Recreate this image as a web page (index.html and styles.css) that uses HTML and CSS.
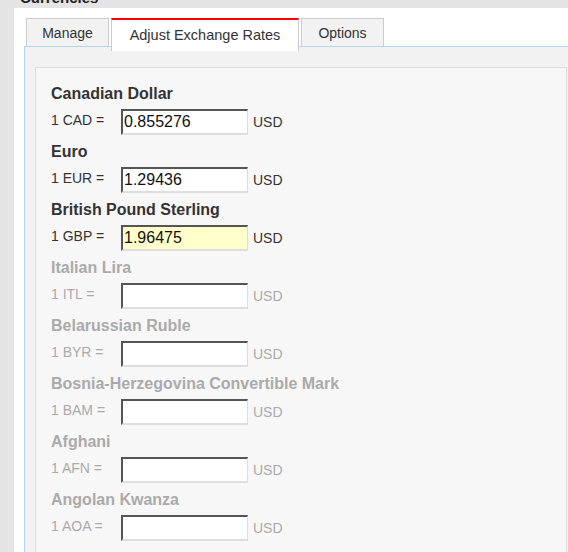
FILE: index.html
```html
<!DOCTYPE html>
<html>
<head>
<meta charset="utf-8">
<title>Currencies</title>
<link rel="stylesheet" href="styles.css">
</head>
<body>
<div class="page-title"><h1>Currencies</h1></div>
<div class="sheet">
  <div class="tabs">
    <div class="tab tab-manage">Manage</div>
    <div class="tab tab-active">Adjust Exchange Rates</div>
    <div class="tab tab-options">Options</div>
  </div>
  <div class="panel">
    <div class="box">
      <div class="cur">
        <div class="cur-name">Canadian Dollar</div>
        <div class="cur-row"><span class="cur-label">1 CAD =</span><input class="cur-input" type="text" value="0.855276"><span class="cur-unit">USD</span></div>
      </div>
      <div class="cur">
        <div class="cur-name">Euro</div>
        <div class="cur-row"><span class="cur-label">1 EUR =</span><input class="cur-input" type="text" value="1.29436"><span class="cur-unit">USD</span></div>
      </div>
      <div class="cur">
        <div class="cur-name">British Pound Sterling</div>
        <div class="cur-row"><span class="cur-label">1 GBP =</span><input class="cur-input cur-input-focus" type="text" value="1.96475"><span class="cur-unit">USD</span></div>
      </div>
      <div class="cur cur-off">
        <div class="cur-name">Italian Lira</div>
        <div class="cur-row"><span class="cur-label">1 ITL =</span><input class="cur-input" type="text" value=""><span class="cur-unit">USD</span></div>
      </div>
      <div class="cur cur-off">
        <div class="cur-name">Belarussian Ruble</div>
        <div class="cur-row"><span class="cur-label">1 BYR =</span><input class="cur-input" type="text" value=""><span class="cur-unit">USD</span></div>
      </div>
      <div class="cur cur-off">
        <div class="cur-name">Bosnia-Herzegovina Convertible Mark</div>
        <div class="cur-row"><span class="cur-label">1 BAM =</span><input class="cur-input" type="text" value=""><span class="cur-unit">USD</span></div>
      </div>
      <div class="cur cur-off">
        <div class="cur-name">Afghani</div>
        <div class="cur-row"><span class="cur-label">1 AFN =</span><input class="cur-input" type="text" value=""><span class="cur-unit">USD</span></div>
      </div>
      <div class="cur cur-off">
        <div class="cur-name">Angolan Kwanza</div>
        <div class="cur-row"><span class="cur-label">1 AOA =</span><input class="cur-input" type="text" value=""><span class="cur-unit">USD</span></div>
      </div>
    </div>
  </div>
</div>
</body>
</html>
```

FILE: styles.css
```css
html {
  overflow: hidden;
}
body {
  margin: 0;
  background: #e4e4e4;
  font-family: "Liberation Sans", Arial, sans-serif;
  color: #333;
}
.page-title {
  height: 8px;
  overflow: hidden;
}
.page-title h1 {
  margin: -10px 0 0 20px;
  font-size: 15px;
  line-height: 15px;
  font-weight: bold;
  color: #222;
}
.sheet {
  margin-left: 14px;
  background: #fff;
  padding: 10px 0 0 10px;
}
.tabs {
  display: flex;
  align-items: flex-start;
  gap: 2px;
  height: 28px;
  margin-left: 2px;
}
.tab {
  box-sizing: border-box;
  height: 28px;
  border: 1px solid #ccc;
  border-bottom: none;
  background: #f2f2f2;
  font-size: 14px;
  line-height: 26px;
  padding-top: 1px;
  text-align: center;
  color: #333;
  white-space: nowrap;
}
.tab-manage {
  width: 83px;
}
.tab-options {
  width: 83px;
}
.tab-active {
  position: relative;
  z-index: 1;
  width: 188px;
  height: 33px;
  padding-top: 0;
  border-top: 2px solid #f00;
  background: #fff;
  font-size: 14.5px;
  line-height: 31px;
}
.panel {
  border-top: 1px solid #b3d5f0;
  border-left: 1px solid #b3d5f0;
  background: #f2f2f2;
  padding: 20px 1px 0 10px;
}
.box {
  border: 1px solid #ddd;
  background: #f7f7f7;
  padding: 16px 0 20px 15px;
}
.cur {
  margin-bottom: 7px;
}
.cur-name {
  font-size: 16px;
  line-height: 20px;
  font-weight: bold;
  color: #333;
  margin-bottom: 5px;
}
.cur-row {
  display: flex;
  align-items: flex-start;
  height: 26px;
}
.cur-label {
  width: 70px;
  flex: none;
  font-size: 14px;
  line-height: 22px;
  color: #333;
  white-space: nowrap;
}
.cur-input {
  box-sizing: border-box;
  width: 127px;
  height: 26px;
  margin: 0;
  padding: 0 0 0 1px;
  border-top: 2px solid #555;
  border-left: 2px solid #555;
  border-right: 1px solid #ddd;
  border-bottom: 2px solid #dedede;
  background: #fff;
  font-family: "Liberation Sans", Arial, sans-serif;
  font-size: 16px;
  color: #111;
  outline: none;
}
.cur-input-focus {
  background: #ffffcc;
}
.cur-unit {
  margin-left: 5px;
  font-size: 14px;
  line-height: 27px;
  color: #333;
}
.cur-off .cur-name,
.cur-off .cur-label,
.cur-off .cur-unit {
  color: #aaa;
}
```
